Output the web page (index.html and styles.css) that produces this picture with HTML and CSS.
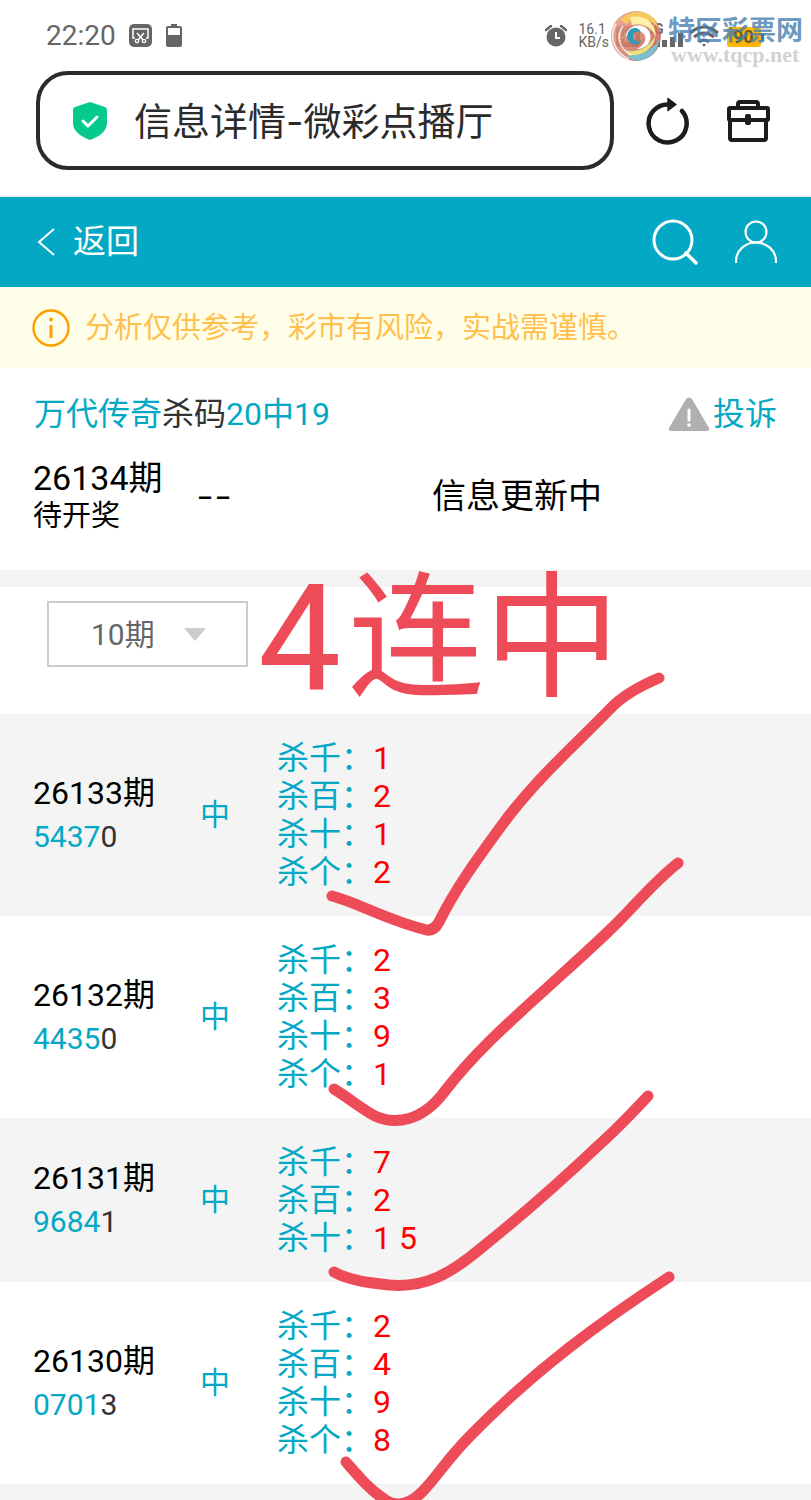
FILE: index.html
```html
<!DOCTYPE html>
<html lang="zh-CN">
<head>
<meta charset="utf-8">
<meta name="viewport" content="width=device-width, initial-scale=1">
<title>信息详情-微彩点播厅</title>
<link rel="stylesheet" href="styles.css">
</head>
<body>
<div class="page">
  <div class="status">
    <time class="clock">22:20</time>
    <svg class="ic-shot" width="23" height="23" viewBox="0 0 23 23"><rect width="23" height="23" rx="5" fill="#666"/><path d="M6 14H4V5h15v9h-2" fill="none" stroke="#fff" stroke-width="1.5"/><path d="M8 9l6 7M15 9l-6 7" stroke="#fff" stroke-width="1.5"/><circle cx="8" cy="17" r="1.700" fill="none" stroke="#fff" stroke-width="1.300"/><circle cx="15" cy="17" r="1.700" fill="none" stroke="#fff" stroke-width="1.300"/></svg>
    <svg class="ic-batt" width="16" height="23" viewBox="0 0 16 23"><path d="M5 0h6v2h3a2 2 0 0 1 2 2v17a2 2 0 0 1-2 2H2a2 2 0 0 1-2-2V4a2 2 0 0 1 2-2h3z" fill="#666"/><path d="M2 4h12v7H2z" fill="#fff"/></svg>
    <span class="spacer"></span>
    <svg class="ic-alarm" width="22" height="22" viewBox="0 0 22 22"><circle cx="11" cy="12" r="9.500" fill="#666"/><path d="M1 5l5-4M21 5l-5-4" stroke="#666" stroke-width="2.500" stroke-linecap="round"/><path d="M11 7v6h4" fill="none" stroke="#fff" stroke-width="2"/></svg>
    <span class="rate">16.1<br>KB/s</span>
    <svg class="ic-net" width="152" height="28" viewBox="0 0 152 28"><rect x="3" y="4" width="24" height="21" rx="4" fill="#666"/><text x="5" y="20" class="t-hd">HD</text><text x="33" y="12" class="t-5g">5G</text><path d="M42 20h5v5h-5zM49 18h5v7h-5zM57 15h5v10h-5zM65 11h5v14h-5z" fill="#666"/><path d="M77 11q14-12 28 0M81 15q10-8 20 0M86 20q5-4 10 0" fill="none" stroke="#666" stroke-width="3"/><path d="M89 22h4l-2 3z" fill="#666"/><rect x="114" y="5" width="34" height="20" rx="3" fill="#fdb500"/><path d="M148 11h3v8h-3z" fill="#666"/><text x="120" y="21" class="t-lvl">90</text></svg>
  </div>
  <div class="browser">
    <div class="address">
      <svg width="36" height="38" viewBox="0 0 36 38"><path d="M18 0L33 5q2 1 2 3v13c0 9-9 14-17 17C10 35 1 30 1 21V8q0-2 2-3z" fill="#06c98e"/><path d="M11 19l5 5 9-9" fill="none" stroke="#fff" stroke-width="3" stroke-linecap="round" stroke-linejoin="round"/></svg>
      <span>信息详情-微彩点播厅</span>
    </div>
    <button class="tool" aria-label="刷新"><svg width="44" height="48" viewBox="0 0 44 48"><path d="M23 7.500A19 19 0 1 0 36 14" fill="none" stroke="#1c1c1c" stroke-width="4.500" stroke-linecap="round"/><path d="M22 1.500l8 6-8 6z" fill="#1c1c1c" stroke="#1c1c1c" stroke-width="1.500" stroke-linejoin="round"/></svg></button>
    <button class="tool" aria-label="工具箱"><svg width="44" height="44" viewBox="0 0 44 44"><path d="M12 9V5q0-2 2-2h16q2 0 2 2v4M4 20v19q0 2 2 2h32q2 0 2-2V20" fill="none" stroke="#1c1c1c" stroke-width="4"/><rect x="3" y="9" width="39" height="12" rx="1" fill="none" stroke="#1c1c1c" stroke-width="4"/><rect x="19" y="15" width="6" height="11" rx="2" fill="#1c1c1c"/></svg></button>
  </div>
  <header class="nav">
    <a class="back" href="#"><svg width="18" height="28" viewBox="0 0 18 28"><path d="M17 1L2 14l15 13" fill="none" stroke="#fff" stroke-width="2"/></svg>返回</a>
    <button class="nav-btn" aria-label="搜索"><svg width="46" height="46" viewBox="0 0 46 46"><circle cx="21" cy="21" r="19" fill="none" stroke="#fff" stroke-width="3"/><path d="M34 34l10 10" stroke="#fff" stroke-width="3.500" stroke-linecap="round"/></svg></button>
    <button class="nav-btn" aria-label="我的"><svg width="42" height="44" viewBox="0 0 42 44"><circle cx="21" cy="12" r="10.500" fill="none" stroke="#fff" stroke-width="2.200"/><path d="M1 43V41a20 18.500 0 0 1 40 0v2" fill="none" stroke="#fff" stroke-width="2.200"/></svg></button>
  </header>
  <p class="notice"><svg width="38" height="38" viewBox="0 0 38 38"><circle cx="19" cy="19" r="17.500" fill="none" stroke="#ff9e00" stroke-width="2.400"/><circle cx="19" cy="10.500" r="2" fill="#ff9e00"/><path d="M19 16v13" stroke="#ff9e00" stroke-width="3"/></svg>分析仅供参考，彩市有风险，实战需谨慎。</p>
  <main>
    <section class="summary">
      <div class="headline">
        <h1>万代传奇<b>杀码</b>20中19</h1>
        <a class="report" href="#"><svg width="42" height="35" viewBox="0 0 42 35"><path d="M18 2q3-3 6 0l17 29q1 3-2 3H3q-3 0-2-3z" fill="#b0b0b0"/><path d="M21 13v10" stroke="#fff" stroke-width="3" stroke-linecap="round"/><circle cx="21" cy="28" r="1.800" fill="#fff"/></svg>投诉</a>
      </div>
      <div class="current">
        <div class="period"><div class="issue">26134期</div><div class="wait">待开奖</div></div>
        <div class="dash">--</div>
        <div class="updating">信息更新中</div>
      </div>
    </section>
    <div class="filter">
      <div class="picker"><select aria-label="期数"><option>10期</option></select></div>
    </div>
    <table class="history">
      <colgroup><col class="c-issue"><col class="c-hit"><col></colgroup>
      <tbody>
      <tr><td><div class="no">26133期</div><div class="code">5437<i>0</i></div></td><td class="hit">中</td><td class="kills">杀千：<b>1</b><br>杀百：<b>2</b><br>杀十：<b>1</b><br>杀个：<b>2</b></td></tr>
      <tr><td><div class="no">26132期</div><div class="code">4435<i>0</i></div></td><td class="hit">中</td><td class="kills">杀千：<b>2</b><br>杀百：<b>3</b><br>杀十：<b>9</b><br>杀个：<b>1</b></td></tr>
      <tr><td><div class="no">26131期</div><div class="code">9684<i>1</i></div></td><td class="hit">中</td><td class="kills">杀千：<b>7</b><br>杀百：<b>2</b><br>杀十：<b>1 5</b></td></tr>
      <tr><td><div class="no">26130期</div><div class="code">0701<i>3</i></div></td><td class="hit">中</td><td class="kills">杀千：<b>2</b><br>杀百：<b>4</b><br>杀十：<b>9</b><br>杀个：<b>8</b></td></tr>
      </tbody>
    </table>
    <div class="next-row"></div>
  </main>
  <div class="marks">
    <div class="streak"><span>4</span>连中</div>
    <svg class="ticks" width="811" height="1500" viewBox="0 0 811 1500"><g fill="none" stroke="#ee4b58" stroke-width="11" stroke-linecap="round" stroke-linejoin="round"><path d="M332 896C358 903 385 919 423 929Q433 933 439 922C455 889 480 855 502 825C535 780 572 748 610 709C622 696 640 686 659 678"/><path d="M334 1089C350 1099 362 1109 375 1116C395 1125 422 1122 445 1091C480 1046 520 1013 560 976C580 958 600 940 618 922C636 904 654 882 678 863"/><path d="M334 1272C350 1281 372 1283 390 1285C425 1288 450 1274 480 1249C520 1217 560 1182 600 1144C617 1129 633 1112 648 1096"/><path d="M346 1462C360 1478 370 1490 384 1499Q402 1512 422 1492C437 1477 446 1460 472 1434C535 1370 600 1322 669 1277"/></g></svg>
    <div class="watermark">
      <svg width="54" height="52" viewBox="0 0 54 52"><defs><linearGradient id="sw" x1="0" y1="0" x2="1" y2="1"><stop offset="0" stop-color="#e8a08c"/><stop offset=".5" stop-color="#d98068"/><stop offset="1" stop-color="#b3484f"/></linearGradient></defs><circle cx="27" cy="26" r="25" fill="url(#sw)" opacity=".85"/><path d="M11 10C20-1 38-1 46 10l4 9C41 7 28 6 17 14c-2-2-4-3-6-4z" fill="#f6c860"/><path d="M21 7c14-3 26 5 26 20-4-10-14-15-24-12z" fill="#fff0a8"/><path d="M17 27c0-11 16-16 23-6 5 10-3 18-12 18 8-4 11-11 6-16-6-5-13-2-17 4z" fill="#fff"/><path d="M17 45c14 2 27-4 33-16 0 13-13 24-26 21z" fill="#77c2d2"/><path d="M15 40c13 4 26-3 31-14 0 12-13 21-26 19z" fill="#e5e47c"/><path d="M20 21c4-5 11-3 12 2-4-3-8-1-8 3 0 5 5 7 9 4-3 6-12 6-14-1-1-3-1-6 1-8z" fill="#2c9ab8"/><path d="M7 14c-8 13-1 29 13 35M14 16c-8 11-3 23 8 29" fill="none" stroke="#fff" stroke-width="1.500" opacity=".8"/></svg>
      <div class="brand"><strong>特区彩票网</strong><span>www.tqcp.net</span></div>
    </div>
  </div>
</div>
</body>
</html>
```
FILE: styles.css
```css
* { box-sizing: border-box; }
body { margin: 0; background: #fff; color: #000; font-family: Roboto, "Noto Sans CJK SC", sans-serif; }
button { padding: 0; border: 0; background: none; }
svg { display: block; flex: none; }
a { text-decoration: none; }
b, i { font-weight: 400; font-style: normal; }
.page { position: relative; display: flex; flex-direction: column; min-height: 100vh; }

.status { display: flex; align-items: center; height: 71px; padding: 0 46px; color: #666; }
.clock { font-size: 28px; line-height: 32px; }
.ic-shot { margin-left: 13px; }
.ic-batt { margin-left: 14px; }
.spacer { flex: 1; }
.rate { margin: 0 4px 0 11px; font-size: 14px; line-height: 13px; }
.t-hd { font: 700 13px Roboto, sans-serif; fill: #fff; }
.t-5g { font: 700 14px Roboto, sans-serif; fill: #666; }
.t-lvl { font: 700 18px Roboto, sans-serif; fill: #6b5a20; }

.browser { display: flex; align-items: center; gap: 36px; padding: 0 41px 25px 36px; border-bottom: 2px solid #eee; }
.address { flex: 1; display: flex; align-items: center; gap: 26px; height: 99px; margin-right: -4px; padding-left: 32px; border: 4px solid #2b2b2b; border-radius: 32px; color: #2b2b2b; font-family: Inter, "Noto Sans CJK SC", sans-serif; font-size: 38px; line-height: 50px; white-space: nowrap; }

.nav { display: flex; align-items: center; gap: 37px; height: 90px; padding: 0 34px 0 37px; background: #03a9c4; }
.back { flex: 1; display: flex; align-items: center; gap: 18px; color: #fff; font-size: 33px; line-height: 44px; }
.notice { display: flex; align-items: center; gap: 15px; height: 81px; margin: 0; padding-left: 32px; background: #fffee8; color: #ffc04d; font-size: 29px; line-height: 40px; white-space: nowrap; }

main { flex: 1; display: flex; flex-direction: column; }
.summary { padding: 25px 34px 36px 33px; border-bottom: 17px solid #f3f3f3; }
.headline { display: flex; justify-content: space-between; align-items: center; padding-left: 1px; color: #03a9c4; font-size: 32px; line-height: 42px; }
.headline h1 { margin: 0; font-size: 32px; font-weight: 400; }
.headline b { color: #333; }
.report { display: flex; align-items: center; gap: 3px; color: #03a9c4; }
.current { display: flex; align-items: center; margin-top: 23px; font-size: 34px; line-height: 40px; }
.period { width: 163px; }
.wait { font-size: 29px; line-height: 36px; }
.dash { width: 236px; font-family: Inter, sans-serif; font-size: 40px; font-weight: 300; }

.filter { height: 127px; padding: 14px 47px; }
.picker { position: relative; width: 201px; }
.picker select { width: 100%; height: 66px; padding: 0 0 0 42px; border: 2px solid #ccc; border-radius: 0; background: #fff; color: #666; font: 30px Roboto, "Noto Sans CJK SC", sans-serif; appearance: none; }
.picker::after { content: ""; position: absolute; right: 42px; top: 27px; border: 11px solid transparent; border-top: 13px solid #ccc; border-bottom: 0; }

.history { width: 100%; border-collapse: collapse; table-layout: fixed; }
.c-issue { width: 200px; }
.c-hit { width: 77px; }
.history td { padding: 25px 0; vertical-align: middle; }
.history td:first-child { padding: 0 0 0 33px; }
.history tr:nth-child(odd) { background: #f4f4f4; }
.no { font-size: 32px; line-height: 43px; }
.code { color: #03a9c4; font-size: 30px; line-height: 43px; }
.code i { color: #333; }
.history .hit { padding: 0; color: #03a9c4; font-size: 30px; line-height: 38px; }
.kills { color: #03a9c4; font-size: 32px; line-height: 38px; }
.kills b { color: #f00; }
.next-row { flex: 1; min-height: 16px; background: #f4f4f4; }

.marks { position: absolute; inset: 0; overflow: hidden; pointer-events: none; }
.ticks { position: absolute; left: 0; top: 0; }
.streak { position: absolute; left: 258px; top: 560px; display: flex; align-items: center; color: #ee4b58; font-size: 136px; line-height: 160px; white-space: nowrap; }
.streak span { width: 90px; font-size: 148px; }
.watermark { position: absolute; right: 8px; top: 10px; display: flex; gap: 5px; }
.brand { display: flex; flex-direction: column; padding-top: 6px; }
.brand strong { color: rgba(70, 125, 175, .8); font-size: 27px; line-height: 30px; }
.brand span { padding-left: 3px; color: #d2d2d2; font: 700 22px/18px "Liberation Serif", serif; }
```
